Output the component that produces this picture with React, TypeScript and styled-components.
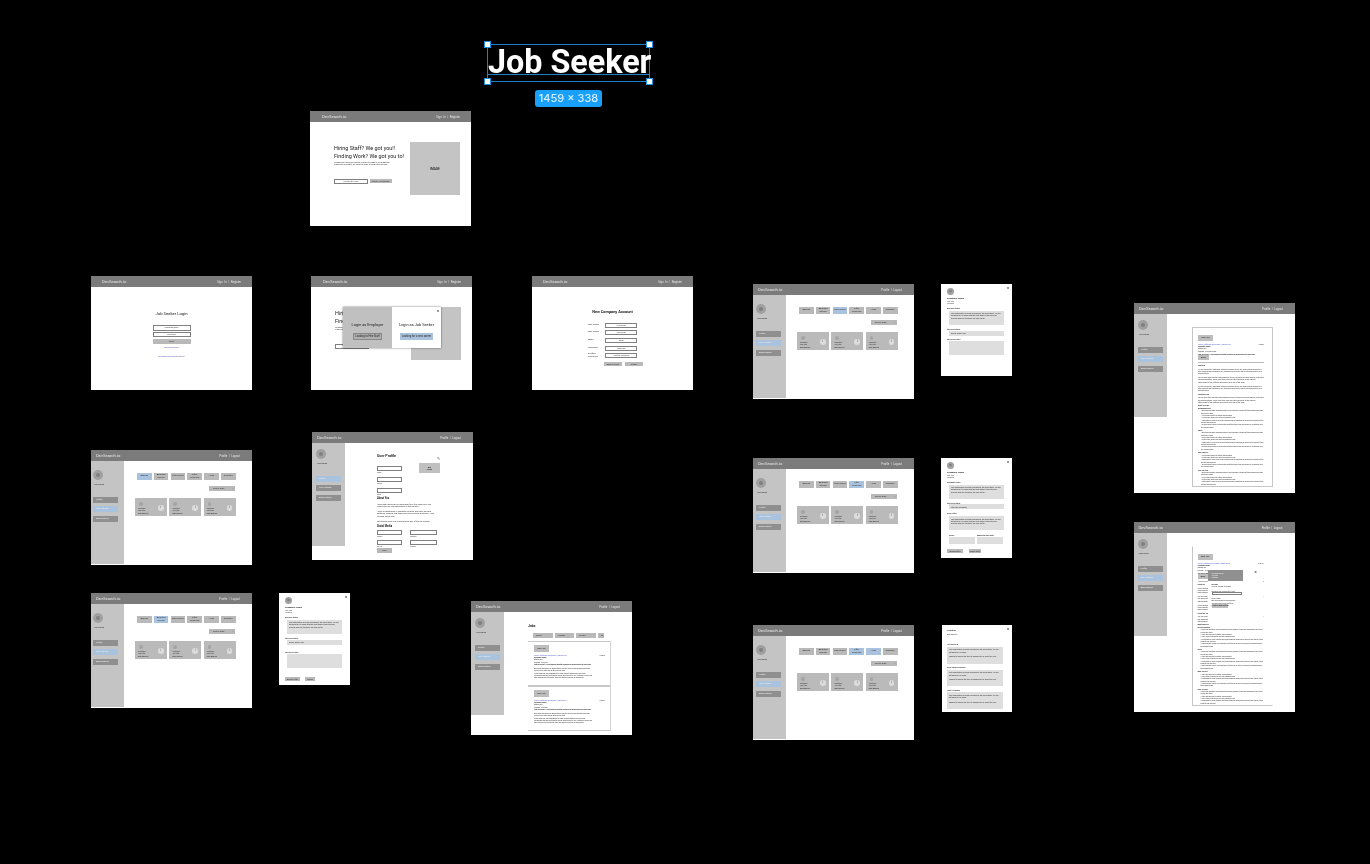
import React from "react";
import styled, { createGlobalStyle } from "styled-components";

const Global = createGlobalStyle`
  html, body { margin: 0; padding: 0; background: #000; overflow: hidden; }
  * { box-sizing: border-box; }
`;

const Canvas = styled.div`
  position: relative;
  width: 1370px;
  height: 864px;
  background: #000;
  overflow: hidden;
  font-family: Roboto, "Liberation Sans", sans-serif;
  color: #222;
`;

const Artboard = styled.section<{ $x: number; $y: number; $w?: number; $h: number }>`
  position: absolute;
  left: ${(p) => p.$x}px;
  top: ${(p) => p.$y}px;
  width: ${(p) => p.$w ?? 161}px;
  height: ${(p) => p.$h}px;
  background: #fff;
  overflow: hidden;
  display: flex;
  flex-direction: column;
  filter: blur(0.3px);
`;

/* ---------- selection overlay on the title ---------- */
const TitleBox = styled.div`
  position: absolute;
  left: 487px;
  top: 44px;
  width: 163px;
  height: 38px;
  border: 1px solid #1b7fc9;
  color: #fff;
  font-size: 32.3px;
  font-weight: 700;
  line-height: 35px;
  white-space: nowrap;
  filter: blur(0.25px);
  &::after {
    content: "";
    position: absolute;
    left: 0;
    right: 0;
    top: 29px;
    height: 1px;
    background: #1b7fc9;
  }
`;
const Handle = styled.span<{ $r?: boolean; $b?: boolean }>`
  position: absolute;
  width: 7px;
  height: 7px;
  background: #fff;
  border: 1px solid #1b8fe0;
  ${(p) => (p.$r ? "right: -4px;" : "left: -4px;")}
  ${(p) => (p.$b ? "bottom: -4px;" : "top: -4px;")}
  z-index: 1;
`;
const SizeBadge = styled.div`
  position: absolute;
  left: 535px;
  top: 90px;
  width: 67px;
  height: 17px;
  border-radius: 3px;
  background: #18a0fb;
  color: #d8eeff;
  font: 500 11px/17px Inter, Roboto, sans-serif;
  text-align: center;
  filter: blur(0.3px);
`;

/* ---------- nav ---------- */
const Nav = styled.header<{ $pad?: number; $padR?: number }>`
  flex: none;
  height: 11px;
  background: #7b7b7b;
  display: flex;
  align-items: center;
  justify-content: space-between;
  padding: 0 ${(p) => p.$padR ?? 12}px 0 ${(p) => p.$pad ?? 5}px;
  color: #e6e6e6;
`;
const Logo = styled.span`
  font-size: 4.2px;
  white-space: nowrap;
`;
const NavLinks = styled.span`
  font-size: 2.8px;
  word-spacing: 1px;
  white-space: nowrap;
`;

/* ---------- app shell ---------- */
const Body = styled.div`
  flex: 1;
  display: flex;
  min-height: 0;
`;
const Sidebar = styled.aside<{ $top: number; $left: number }>`
  flex: none;
  width: 33px;
  height: 103px;
  background: #c4c4c4;
  display: flex;
  flex-direction: column;
  padding: ${(p) => p.$top}px 0 0 ${(p) => p.$left}px;
`;
const Avatar = styled.div<{ $s?: number }>`
  flex: none;
  width: ${(p) => p.$s ?? 10}px;
  height: ${(p) => p.$s ?? 10}px;
  border-radius: 50%;
  background: #a0a0a0;
  display: flex;
  align-items: center;
  justify-content: center;
  &::after {
    content: "";
    width: 40%;
    height: 40%;
    border-radius: 50%;
    background: #808080;
  }
`;
const UserName = styled.div`
  font-size: 2.2px;
  margin: 3px 0 11px 1px;
  color: #333;
`;
const SideButton = styled.div<{ $active?: boolean }>`
  width: 25px;
  height: 6px;
  margin-bottom: 3.4px;
  padding-left: 3px;
  background: ${(p) => (p.$active ? "#a9c2de" : "#8f8f8f")};
  color: #eee;
  font-size: 2.3px;
  line-height: 6px;
  white-space: nowrap;
`;
const Main = styled.main<{ $pt?: number; $pl?: number }>`
  flex: 1;
  min-width: 0;
  padding: ${(p) => p.$pt ?? 0}px 0 0 ${(p) => p.$pl ?? 0}px;
  display: flex;
  flex-direction: column;
  align-items: flex-start;
  position: relative;
`;

const Shell: React.FC<{
  side: number;
  compact?: boolean;
  left?: number;
  pt?: number;
  pl?: number;
  children: React.ReactNode;
}> = ({ side, compact, left, pt, pl, children }) => (
  <>
    <Nav>
      <Logo>DevSearch.io</Logo>
      <NavLinks>Profile | Logout</NavLinks>
    </Nav>
    <Body>
      <Sidebar $top={compact ? 6 : 9} $left={left ?? 4}>
        <Avatar />
        <UserName>UserName</UserName>
        {["Profile", "Job Listings", "Applications"].map((t, i) => (
          <SideButton key={t} $active={i === side}>
            {t}
          </SideButton>
        ))}
      </Sidebar>
      <Main $pt={pt} $pl={pl}>
        {children}
      </Main>
    </Body>
  </>
);

/* ---------- dashboard ---------- */
const Tabs = styled.div`
  display: grid;
  grid-template-columns: repeat(6, 14.6px);
  column-gap: 2.2px;
  margin-left: 2px;
`;
const Tab = styled.div<{ $on?: boolean }>`
  height: 7px;
  background: ${(p) => (p.$on ? "#a9c2de" : "#b9b9b9")};
  font-size: 2.3px;
  line-height: 2.4px;
  padding: 0 0.5px;
  display: flex;
  align-items: center;
  justify-content: center;
  text-align: center;
  color: #333;
`;
const SortSelect = styled.div`
  align-self: flex-end;
  width: 26px;
  height: 5px;
  margin: 6px 17px 7px 0;
  padding: 0 1.5px 0 4px;
  background: #b9b9b9;
  display: flex;
  align-items: center;
  justify-content: space-between;
  font-size: 2.1px;
  color: #333;
`;
const CardRow = styled.div`
  display: grid;
  grid-template-columns: repeat(3, 32px);
  column-gap: 2.4px;
`;
const AppCard = styled.article`
  height: 18px;
  background: #bababa;
  padding: 2px 1.5px 0 3px;
  display: flex;
  align-items: center;
  justify-content: space-between;
`;
const CardInfo = styled.div`
  display: flex;
  flex-direction: column;
  font-size: 1.8px;
  line-height: 2.2px;
  color: #333;
`;
const CardDot = styled.div`
  width: 3.5px;
  height: 3.5px;
  border-radius: 50%;
  background: #a5a5a5;
  margin: 0 0 1.5px 1px;
`;
const InfoDot = styled.div`
  flex: none;
  width: 5.5px;
  height: 5.5px;
  margin-right: 2px;
  border-radius: 50%;
  background: #dcdcdc;
  color: #444;
  font-size: 3px;
  line-height: 5.5px;
  text-align: center;
`;

const tabNames = ["Applied", "Awaiting Review", "Interviewed", "Offer Received", "Hired", "Rejected"];
const Dashboard: React.FC<{ x: number; y: number; on: number[]; left?: number }> = ({ x, y, on, left }) => (
  <Artboard $x={x} $y={y} $h={114.5}>
    <Shell side={1} left={left ?? 3} pt={12} pl={11}>
      <Tabs>
        {tabNames.map((t, i) => (
          <Tab key={t} $on={on.includes(i)}>
            {t}
          </Tab>
        ))}
      </Tabs>
      <SortSelect>
        Sort by Date <span>⌄</span>
      </SortSelect>
      <CardRow>
        {[0, 1, 2].map((i) => (
          <AppCard key={i}>
            <CardInfo>
              <CardDot />
              <span>Company</span>
              <span>Job Title</span>
              <span>Date Applied</span>
            </CardInfo>
            <InfoDot>i</InfoDot>
          </AppCard>
        ))}
      </CardRow>
    </Shell>
  </Artboard>
);

/* ---------- landing ---------- */
const Hero = styled.div`
  flex: 1;
  display: flex;
  padding: 20px 11px 0 24px;
  justify-content: space-between;
`;
const HeroText = styled.div`
  width: 74px;
  padding-top: 3px;
`;
const HeroTitle = styled.div`
  font-size: 5.45px;
  line-height: 7.6px;
  white-space: nowrap;
  color: #222;
`;
const SmallText = styled.p<{ $mt?: number; $w?: number }>`
  margin: ${(p) => p.$mt ?? 0}px 0 0;
  font-size: 2.05px;
  line-height: 2.6px;
  color: #333;
  ${(p) => (p.$w ? `width: ${p.$w}px;` : "")}
`;
const HeroActions = styled.div`
  display: flex;
  gap: 1.5px;
  margin-top: 12px;
  align-items: center;
`;
const TextInput = styled.div<{ $w?: number; $h?: number }>`
  flex: none;
  width: ${(p) => p.$w ?? 34}px;
  height: ${(p) => p.$h ?? 5}px;
  border: 1px solid #808080;
  background: #fff;
  font-size: 1.9px;
  line-height: 3px;
  text-align: center;
  color: #444;
  white-space: nowrap;
  overflow: hidden;
`;
const GreyButton = styled.div<{ $w: number; $h?: number; $dark?: boolean }>`
  flex: none;
  width: ${(p) => p.$w}px;
  height: ${(p) => p.$h ?? 4}px;
  background: ${(p) => (p.$dark ? "#909090" : "#b9b9b9")};
  font-size: 2px;
  line-height: ${(p) => p.$h ?? 4}px;
  text-align: center;
  color: #333;
  white-space: nowrap;
  overflow: hidden;
`;
const HeroImage = styled.div`
  width: 50px;
  height: 53px;
  background: #c4c4c4;
  display: flex;
  align-items: center;
  justify-content: center;
  font-size: 3.2px;
  font-weight: 500;
  color: #222;
`;
const Landing: React.FC = () => (
  <>
    <Nav $pad={12} $padR={11}>
      <Logo>DevSearch.io</Logo>
      <NavLinks>Sign In | Register</NavLinks>
    </Nav>
    <Hero>
      <HeroText>
        <HeroTitle>
          Hiring Staff? We got you!!
          <br />
          Finding Work? We got you to!
        </HeroTitle>
        <SmallText $mt={1.5} $w={60}>
          Whether you are a job seeker looking to break in, an employer looking to hire staff, we have the tools to help
          you succeed.
        </SmallText>
        <HeroActions>
          <TextInput>Looking for a job?</TextInput>
          <GreyButton $w={22}>Signup / Get Started</GreyButton>
        </HeroActions>
      </HeroText>
      <HeroImage>IMAGE</HeroImage>
    </Hero>
  </>
);

/* ---------- login chooser overlay ---------- */
const Chooser = styled.div`
  position: absolute;
  left: 32px;
  top: 30.5px;
  width: 98px;
  height: 41px;
  display: flex;
  background: #fff;
  box-shadow: 0 0 2px rgba(0, 0, 0, 0.55);
`;
const ChooserSide = styled.div<{ $grey?: boolean }>`
  position: relative;
  width: 49px;
  background: ${(p) => (p.$grey ? "#c0c0c0" : "#fff")};
  display: flex;
  flex-direction: column;
  align-items: center;
  gap: 6px;
  padding-top: 15px;
  font-size: 3.9px;
  color: #222;
  white-space: nowrap;
`;
const ChooserBtn = styled.div<{ $blue?: boolean }>`
  padding: 0 1.5px;
  height: 7px;
  font-size: 2.7px;
  background: ${(p) => (p.$blue ? "#a9c2de" : "#b0b0b0")};
  border: ${(p) => (p.$blue ? "0" : "1px solid #888")};
  line-height: ${(p) => (p.$blue ? "7px" : "5px")};
`;
const Close = styled.span<{ $r: number; $t: number; $s?: number }>`
  position: absolute;
  right: ${(p) => p.$r}px;
  top: ${(p) => p.$t}px;
  font-size: ${(p) => p.$s ?? 4}px;
  line-height: 1;
  font-weight: 700;
  color: #111;
`;

/* ---------- forms ---------- */
const CenterForm = styled.div<{ $pt: number }>`
  flex: 1;
  display: flex;
  flex-direction: column;
  align-items: center;
  padding-top: ${(p) => p.$pt}px;
`;
const FormTitle = styled.h1<{ $bold?: boolean }>`
  margin: 0;
  font-size: ${(p) => (p.$bold ? 3.9 : 4.2)}px;
  font-weight: ${(p) => (p.$bold ? 700 : 400)};
  line-height: 5px;
  color: #222;
  white-space: nowrap;
`;
const LinkText = styled.div<{ $mt: number }>`
  margin-top: ${(p) => p.$mt}px;
  font-size: 1.9px;
  line-height: 2.4px;
  color: #5a5aa8;
  white-space: nowrap;
`;
const Stack = styled.div<{ $gap: number; $mt: number }>`
  display: flex;
  flex-direction: column;
  gap: ${(p) => p.$gap}px;
  margin-top: ${(p) => p.$mt}px;
`;
const FieldRow = styled.div`
  display: flex;
  align-items: center;
  justify-content: flex-end;
  gap: 1.5px;
  height: 5px;
`;
const RowLabel = styled.span`
  width: 16px;
  font-size: 2.3px;
  line-height: 2.5px;
  color: #333;
`;
const ButtonRow = styled.div<{ $mt: number; $gap: number; $ml?: number }>`
  display: flex;
  gap: ${(p) => p.$gap}px;
  margin: ${(p) => p.$mt}px 0 0 ${(p) => p.$ml ?? 0}px;
`;

/* ---------- profile ---------- */
const ProfileHead = styled.div`
  display: flex;
  gap: 17px;
  width: 71px;
`;
const ProfileCol = styled.div`
  display: flex;
  flex-direction: column;
`;
const SectionHead = styled.div<{ $s?: number; $mt?: number }>`
  margin-top: ${(p) => p.$mt ?? 0}px;
  font-size: ${(p) => p.$s ?? 2.6}px;
  line-height: ${(p) => (p.$s ?? 2.6) + 0.6}px;
  font-weight: 700;
  color: #222;
  white-space: nowrap;
`;
const FieldBlock = styled.div<{ $mt?: number; $w?: number }>`
  margin-top: ${(p) => p.$mt ?? 0}px;
  width: ${(p) => p.$w ?? 25}px;
  font-size: 1.7px;
  line-height: 2.2px;
  color: #444;
`;
const PhotoCol = styled.div`
  display: flex;
  flex-direction: column;
  align-items: flex-end;
  padding-top: 3px;
  font-size: 4px;
  line-height: 1;
  color: #111;
`;
const PhotoBox = styled.div`
  width: 21px;
  height: 10px;
  margin-top: 2px;
  background: #c0c0c0;
  font-size: 1.9px;
  line-height: 2.2px;
  display: flex;
  align-items: center;
  justify-content: center;
  text-align: center;
`;
const SocialGrid = styled.div`
  display: grid;
  grid-template-columns: 25px 27px;
  column-gap: 8px;
  row-gap: 2.8px;
  margin-top: 1.5px;
`;

/* ---------- jobs ---------- */
const FilterRow = styled.div`
  display: flex;
  gap: 1.8px;
  margin: 5px 0 3px 5px;
`;
const Filter = styled.div<{ $w: number }>`
  width: ${(p) => p.$w}px;
  height: 5px;
  padding-left: 3px;
  background: #b9b9b9;
  font-size: 1.9px;
  line-height: 5px;
  color: #333;
  white-space: nowrap;
  overflow: hidden;
`;
const JobCard = styled.article`
  position: relative;
  flex: none;
  width: 83px;
  height: 45px;
  padding: 3px 5px 0 6px;
  background: #fff;
  border-top: 1px solid #c8c8c8;
  border-right: 1px solid #d4d4d4;
  border-bottom: 1px solid #c8c8c8;
  overflow: hidden;
`;
const AppliedTag = styled.div<{ $w?: number; $h?: number }>`
  width: ${(p) => p.$w ?? 15}px;
  height: ${(p) => p.$h ?? 7}px;
  margin-bottom: 1.5px;
  background: #bdbdbd;
  font-size: 2.1px;
  line-height: ${(p) => p.$h ?? 7}px;
  text-align: center;
  color: #222;
  white-space: nowrap;
`;
const LinkLine = styled.div`
  display: flex;
  justify-content: space-between;
  font-size: 1.9px;
  line-height: 2.5px;
  color: #5a5ad2;
  white-space: nowrap;
  & > span:last-child {
    color: #444;
  }
`;
const TinyBold = styled.div<{ $mt?: number }>`
  margin-top: ${(p) => p.$mt ?? 0}px;
  font-size: 1.75px;
  line-height: 2.4px;
  font-weight: 700;
  color: #222;
  white-space: nowrap;
`;
const TinyLine = styled.div<{ $mt?: number }>`
  margin-top: ${(p) => p.$mt ?? 0}px;
  font-size: 1.7px;
  line-height: 2.3px;
  color: #333;
`;

const JobBody: React.FC = () => (
  <JobCard>
    <AppliedTag>Save Job</AppliedTag>
    <LinkLine>
      <span>Junior Software Developer | Startup Inc.</span>
      <span>5 days</span>
    </LinkLine>
    <TinyBold>Company Name</TinyBold>
    <TinyLine>Ottawa, ON</TinyLine>
    <TinyLine>$60,000 - $75,000</TinyLine>
    <TinyBold>Job Overview: A fast moving startup looking for a developer to join team.</TinyBold>
    <TinyLine $mt={1.5}>Build and maintain web applications with the wider product team members.</TinyLine>
    <TinyLine>Work closely with design and review code.</TinyLine>
    <TinyLine>Write tests and documentation for new product features as they ship.</TinyLine>
    <TinyLine>Collaborate across the team to deliver great work for our customers every day.</TinyLine>
    <TinyLine>Take ownership of projects from the start all the way to production.</TinyLine>
  </JobCard>
);

/* ---------- resume ---------- */
const ResumeDoc = styled.article<{ $open?: boolean }>`
  position: relative;
  width: 81px;
  height: 160px;
  margin: 13px 0 0 25px;
  padding: 7px 8px 0 5px;
  border: 1px solid #c6c6c6;
  ${(p) => (p.$open ? "border-top-color: transparent; border-right-color: transparent;" : "")}
  background: #fff;
  overflow: hidden;
`;
const Rule = styled.div`
  height: 1px;
  background: #bbb;
  margin: 1px 0;
`;
const Bullets = styled.ul`
  margin: 0;
  padding: 0 0 0 3px;
  list-style: none;
`;
const BulletItem = styled.li`
  font-size: 1.65px;
  line-height: 2.35px;
  color: #333;
`;
const ResumeText = styled.p`
  margin: 1.4px 0 0;
  font-size: 1.65px;
  line-height: 2.35px;
  color: #333;
`;
const para =
  "We are looking for a motivated software developer to join our growing team and help us build products that customers love, working across the full stack with modern tools and good practices.";
const paraLong =
  "You will work with designers and engineers to plan, build and ship new features, write tests and documentation, review code from your peers and contribute to the ongoing improvement of our platform and process every day of the week.";
const points = [
  "Build and maintain web applications using modern JavaScript frameworks and tools across the stack",
  "Work with product to define requirements",
  "Write clean, tested and well documented code",
  "Participate in code reviews and team planning meetings to improve the quality of the product and process",
  "Troubleshoot issues in production and fix bugs as they are raised by customers and the support team",
];

const ResumeContent: React.FC = () => (
  <>
    <AppliedTag $w={15} $h={6}>
      Save Job
    </AppliedTag>
    <LinkLine>
      <span>Junior Software Developer | Startup Inc.</span>
      <span>5 days</span>
    </LinkLine>
    <TinyBold>Company Name</TinyBold>
    <TinyLine>Ottawa, ON</TinyLine>
    <TinyLine>$60,000 - $75,000 a year</TinyLine>
    <TinyBold $mt={1}>Job Overview: A fast moving startup looking for a developer to join team.</TinyBold>
    <AppliedTag $w={11} $h={5}>
      Apply
    </AppliedTag>
    <Rule />
    <TinyBold>About Us</TinyBold>
    <ResumeText>{para}</ResumeText>
    <ResumeText>{paraLong}</ResumeText>
    <ResumeText>{para}</ResumeText>
    <TinyBold $mt={1}>About the Job</TinyBold>
    <ResumeText>{paraLong}</ResumeText>
    <TinyBold $mt={1}>What You'll Do</TinyBold>
    <TinyBold>Responsibilities</TinyBold>
    <Bullets>
      {points.map((t, i) => (
        <BulletItem key={i}>• {t}</BulletItem>
      ))}
    </Bullets>
    <TinyBold $mt={1}>Skills</TinyBold>
    <Bullets>
      {points.map((t, i) => (
        <BulletItem key={i}>• {t}</BulletItem>
      ))}
    </Bullets>
    <TinyBold $mt={1}>Who You Are</TinyBold>
    <Bullets>
      {points.slice(1, 5).map((t, i) => (
        <BulletItem key={i}>• {t}</BulletItem>
      ))}
    </Bullets>
    <TinyBold $mt={1}>Nice To Have</TinyBold>
    <Bullets>
      {points.slice(0, 4).map((t, i) => (
        <BulletItem key={i}>• {t}</BulletItem>
      ))}
    </Bullets>
  </>
);

const ApplyPop = styled.div`
  position: absolute;
  left: 15px;
  top: 23px;
  width: 55px;
  height: 52px;
  background: #fff;
  padding: 0;
`;
const ApplyHead = styled.div`
  width: 35px;
  height: 11px;
  background: #909090;
  color: #eee;
  font-size: 1.7px;
  line-height: 2.2px;
  padding: 2px 0 0 4px;
`;
const ApplyBody = styled.div`
  padding: 2px 0 0 4px;
`;

/* ---------- detail modal frames ---------- */
const ModalFill = styled.div<{ $pl?: number; $pt?: number; $pr?: number }>`
  position: relative;
  flex: 1;
  padding: ${(p) => p.$pt ?? 3.5}px ${(p) => p.$pr ?? 8}px 0 ${(p) => p.$pl ?? 6}px;
`;
const NoteBox = styled.div<{ $h: number; $mt?: number; $ml?: number }>`
  height: ${(p) => p.$h}px;
  margin: ${(p) => p.$mt ?? 1.8}px 0 0 ${(p) => p.$ml ?? 2}px;
  padding: 1.5px 2px;
  background: #dedede;
  font-size: 1.85px;
  line-height: 2.3px;
  color: #333;
  overflow: hidden;
`;
const ModalName = styled.div<{ $mt?: number }>`
  margin-top: ${(p) => p.$mt ?? 3}px;
  font-size: 2.4px;
  line-height: 2.6px;
  font-weight: 700;
  color: #222;
  white-space: nowrap;
`;
const ModalSub = styled.div`
  font-size: 1.8px;
  line-height: 2px;
  color: #444;
`;
const ModalLabel = styled.div<{ $mt: number }>`
  margin-top: ${(p) => p.$mt}px;
  font-size: 1.9px;
  line-height: 2.2px;
  font-weight: 700;
  color: #333;
  white-space: nowrap;
`;
const TwoCol = styled.div`
  display: grid;
  grid-template-columns: 26px 26px;
  column-gap: 2px;
  margin: 3.5px 0 0 2px;
`;

const note =
  "Your application is being reviewed by the hiring team. We will get back to you soon with the next steps in the interview process and any feedback we have so far.";
const noteShort = "Your application is being reviewed by the hiring team. We will get back to you soon.";

const Head: React.FC = () => (
  <>
    <Avatar $s={7} />
    <ModalName>Company Name</ModalName>
    <ModalSub>Job Title</ModalSub>
    <ModalSub>Location</ModalSub>
  </>
);

export default function App() {
  return (
    <Canvas>
      <Global />
      <TitleBox>
        Job Seeker
        <Handle />
        <Handle $r />
        <Handle $b />
        <Handle $r $b />
      </TitleBox>
      <SizeBadge>1459 × 338</SizeBadge>

      <Artboard $x={310} $y={111} $h={115}>
        <Landing />
      </Artboard>

      <Artboard $x={91} $y={276} $h={114}>
        <Nav $pad={11} $padR={11}>
          <Logo>DevSearch.io</Logo>
          <NavLinks>Sign In | Register</NavLinks>
        </Nav>
        <CenterForm $pt={24}>
          <FormTitle>Job Seeker Login</FormTitle>
          <Stack $gap={1} $mt={9}>
            <TextInput $w={38} $h={6}>
              Username/Email
            </TextInput>
            <TextInput $w={38} $h={5}>
              Password
            </TextInput>
          </Stack>
          <ButtonRow $mt={2} $gap={0}>
            <GreyButton $w={38} $h={5}>
              Login
            </GreyButton>
          </ButtonRow>
          <LinkText $mt={2}>Forgot Password?</LinkText>
          <LinkText $mt={6.5}>Don't have an account? Sign Up</LinkText>
        </CenterForm>
      </Artboard>

      <Artboard $x={311} $y={276} $h={114}>
        <Landing />
        <Chooser>
          <ChooserSide $grey>
            Login as Employer
            <ChooserBtn>Looking to Hire Staff</ChooserBtn>
          </ChooserSide>
          <ChooserSide>
            <Close $r={2} $t={2.5}>
              ×
            </Close>
            Login as Job Seeker
            <ChooserBtn $blue>Looking for a new career</ChooserBtn>
          </ChooserSide>
        </Chooser>
      </Artboard>

      <Artboard $x={532} $y={276} $h={114}>
        <Nav $pad={11} $padR={11}>
          <Logo>DevSearch.io</Logo>
          <NavLinks>Sign In | Register</NavLinks>
        </Nav>
        <CenterForm $pt={22}>
          <FormTitle $bold>New Company Account</FormTitle>
          <Stack $gap={2.7} $mt={8.5}>
            {["First Name", "Last Name", "Email", "Password", "Confirm Password"].map((l) => (
              <FieldRow key={l}>
                <RowLabel>{l}</RowLabel>
                <TextInput $w={32}>{l}</TextInput>
              </FieldRow>
            ))}
          </Stack>
          <ButtonRow $mt={4} $gap={3} $ml={22}>
            <GreyButton $w={18}>Back to Login</GreyButton>
            <GreyButton $w={18}>Create</GreyButton>
          </ButtonRow>
        </CenterForm>
      </Artboard>

      <Dashboard x={753} y={284} on={[2]} />
      <Dashboard x={91} y={450} on={[0]} left={2} />
      <Dashboard x={91} y={593} on={[1]} left={2} />
      <Dashboard x={753} y={458} on={[3]} />
      <Dashboard x={753} y={625} on={[3, 4]} />

      <Artboard $x={312} $y={432} $h={128}>
        <Shell side={0} compact pt={11} pl={32}>
          <ProfileHead>
            <ProfileCol>
              <SectionHead $s={3.6}>User Profile</SectionHead>
              <FieldBlock $mt={7.5}>
                <TextInput $w={25} />
                Name
              </FieldBlock>
              <FieldBlock $mt={3.8}>
                <TextInput $w={25} />
                Phone
              </FieldBlock>
              <FieldBlock $mt={3.8}>
                <TextInput $w={25} />
                Email
              </FieldBlock>
            </ProfileCol>
            <PhotoCol>
              <span>✎</span>
              <PhotoBox>
                Add
                <br />
                Image
              </PhotoBox>
            </PhotoCol>
          </ProfileHead>
          <SectionHead $s={2.6} $mt={2.5}>
            About You
          </SectionHead>
          <SmallText $mt={3} $w={58}>
            I have been working as a developer for a few years and I am looking for my next opportunity in the industry.
          </SmallText>
          <SmallText $mt={2} $w={58}>
            I have a background in computer science and enjoy building software, working with teams and solving hard
            problems. I love working on the web.
          </SmallText>
          <SmallText $mt={2} $w={58}>
            Feel free to reach out to me through any of the links below.
          </SmallText>
          <SectionHead $s={2.6} $mt={2}>
            Social Media
          </SectionHead>
          <SocialGrid>
            <FieldBlock>
              <TextInput $w={25} />
              Twitter
            </FieldBlock>
            <FieldBlock $w={27}>
              <TextInput $w={27} />
              LinkedIn
            </FieldBlock>
            <FieldBlock>
              <TextInput $w={25} />
              GitHub
            </FieldBlock>
            <FieldBlock $w={27}>
              <TextInput $w={27} />
              Website
            </FieldBlock>
          </SocialGrid>
          <ButtonRow $mt={1} $gap={0}>
            <GreyButton $w={15} $h={5}>
              Save
            </GreyButton>
          </ButtonRow>
        </Shell>
      </Artboard>

      <Artboard $x={471} $y={601} $h={134}>
        <Shell side={1} compact pt={12} pl={24}>
          <SectionHead $s={3.4}>Jobs</SectionHead>
          <FilterRow>
            <Filter $w={20}>Search</Filter>
            <Filter $w={19.5}>Location</Filter>
            <Filter $w={20}>Country</Filter>
            <Filter $w={6}>Go</Filter>
          </FilterRow>
          <JobBody />
          <JobBody />
        </Shell>
      </Artboard>

      <Artboard $x={1134} $y={303} $h={190}>
        <Shell side={1} compact>
          <ResumeDoc>
            <ResumeContent />
          </ResumeDoc>
        </Shell>
      </Artboard>

      <Artboard $x={1133.5} $y={522} $h={190}>
        <Shell side={1} compact>
          <ResumeDoc $open>
            <ResumeContent />
            <ApplyPop>
              <ApplyHead>
                Company Name
                <br />
                Job Title
                <br />
                Location
              </ApplyHead>
              <Close $r={6} $t={0}>
                ×
              </Close>
              <ApplyBody>
                <TinyBold>Resume</TinyBold>
                <TinyLine>Choose resume to upload</TinyLine>
                <TinyLine $mt={2}>Upload a new resume file (.pdf)</TinyLine>
                <TextInput $w={30} $h={3} />
                <TinyLine $mt={2}>Cover Letter</TinyLine>
                <TinyLine>Add a message to the employer</TinyLine>
                <TinyLine>Include links to your portfolio</TinyLine>
                <AppliedTag $w={16} $h={4}>
                  Submit Application
                </AppliedTag>
              </ApplyBody>
            </ApplyPop>
          </ResumeDoc>
        </Shell>
      </Artboard>

      {[
        { x: 941, y: 284 },
        { x: 279, y: 593 },
      ].map((m, idx) => (
        <Artboard key={idx} $x={m.x} $y={m.y} $w={71} $h={92}>
          <ModalFill>
            <Close $r={3} $t={2}>
              ×
            </Close>
            <Head />
            <ModalLabel $mt={2.5}>Resume Status</ModalLabel>
            <NoteBox $h={14}>{note}</NoteBox>
            <ModalLabel $mt={3}>Interview Stage</ModalLabel>
            <NoteBox $h={5} $mt={1}>
              Online Screen Call
            </NoteBox>
            <ModalLabel $mt={idx === 1 ? 6 : 2}>Interview Notes</ModalLabel>
            <NoteBox $h={14} $mt={1}/>
            {idx === 1 && (
              <ButtonRow $mt={9} $gap={5}>
                <GreyButton $w={15}>Accept Offer</GreyButton>
                <GreyButton $w={10}>Reject</GreyButton>
              </ButtonRow>
            )}
          </ModalFill>
        </Artboard>
      ))}

      <Artboard $x={941} $y={458} $w={71} $h={100}>
        <ModalFill>
          <Close $r={3} $t={2}>
            ×
          </Close>
          <Head />
          <ModalLabel $mt={2.5}>Company Notes</ModalLabel>
          <NoteBox $h={14}>{note}</NoteBox>
          <ModalLabel $mt={3}>Interview Stage</ModalLabel>
          <NoteBox $h={5} $mt={0.5}>
            Interview Complete
          </NoteBox>
          <ModalLabel $mt={3}>Offer Letter</ModalLabel>
          <NoteBox $h={14}>{note}</NoteBox>
          <TwoCol>
            <ModalLabel $mt={0}>Salary</ModalLabel>
            <ModalLabel $mt={0}>Expected Start Date</ModalLabel>
            <NoteBox $h={7} $ml={0} $mt={1} />
            <NoteBox $h={7} $ml={0} $mt={1} />
          </TwoCol>
          <ButtonRow $mt={5} $gap={6}>
            <GreyButton $w={16}>Accept Offer</GreyButton>
            <GreyButton $w={12}>Reject Offer</GreyButton>
          </ButtonRow>
        </ModalFill>
      </Artboard>

      <Artboard $x={942} $y={625} $w={70} $h={87}>
        <ModalFill $pl={5} $pt={3} $pr={9}>
          <Close $r={3} $t={2}>
            ×
          </Close>
          <ModalName $mt={2}>Position</ModalName>
          <ModalSub>Date Applied</ModalSub>
          <ModalLabel $mt={8.4}>1st Interview</ModalLabel>
          <NoteBox $h={17} $ml={0}>
            {noteShort}
            <br />
            <br />
            Thanks for taking the time to speak with us about the role.
          </NoteBox>
          <ModalLabel $mt={2}>Offer Stage Feedback</ModalLabel>
          <NoteBox $h={16} $ml={0}>
            {noteShort}
            <br />
            <br />
            Thanks for taking the time to speak with us about the role.
          </NoteBox>
          <ModalLabel $mt={3}>Final Feedback</ModalLabel>
          <NoteBox $h={17} $ml={0} $mt={1}>
            {noteShort}
            <br />
            <br />
            Thanks for taking the time to speak with us about the role.
          </NoteBox>
        </ModalFill>
      </Artboard>
    </Canvas>
  );
}
